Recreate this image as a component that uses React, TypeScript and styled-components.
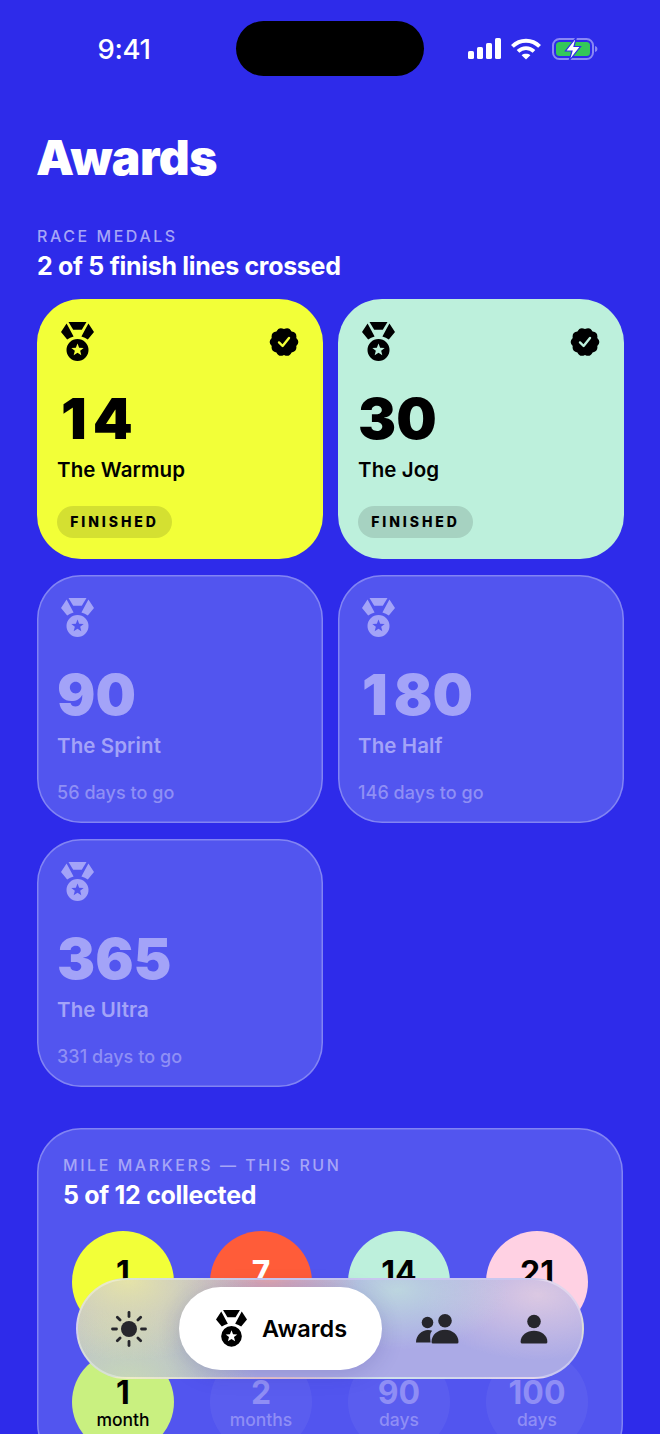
import React from "react";
import styled, { createGlobalStyle } from "styled-components";

const GlobalStyle = createGlobalStyle`
  html, body {
    margin: 0;
    padding: 0;
    background: #2e2bea;
  }
  body {
    font-family: Inter, "Liberation Sans", sans-serif;
    -webkit-font-smoothing: antialiased;
  }
`;

const Screen = styled.div`
  position: relative;
  width: 660px;
  height: 1434px;
  padding-top: 21px;
  box-sizing: border-box;
  overflow: hidden;
  background: #2e2bea;
  color: #ffffff;
`;

const StatusBar = styled.div`
  display: flex;
  align-items: center;
  height: 55px;
`;

const Time = styled.div`
  width: 236px;
  padding-left: 12px;
  box-sizing: border-box;
  text-align: center;
  font-size: 27.5px;
  font-weight: 500;
  letter-spacing: -0.3px;
`;

const Island = styled.div`
  width: 188px;
  height: 55px;
  border-radius: 28px;
  background: #000000;
`;

const StatusIcons = styled.div`
  display: flex;
  align-items: center;
  gap: 10px;
  margin-left: 44px;
`;

const Content = styled.div`
  padding: 0 37px;
`;

const Title = styled.h1`
  margin: 54px 0 0 -1px;
  font-size: 48px;
  line-height: 56px;
  font-weight: 900;
  letter-spacing: -0.5px;
`;

const Eyebrow = styled.div`
  font-size: 16px;
  line-height: 20px;
  font-weight: 500;
  letter-spacing: 2.55px;
  color: #a6a5f7;
`;

const Headline = styled.div`
  font-size: 25px;
  line-height: 32px;
  font-weight: 700;
  letter-spacing: -0.3px;
  margin-top: 4px;
  color: #ffffff;
`;

const MedalSection = styled.section`
  margin-top: 40px;
`;

const MedalGrid = styled.div`
  display: grid;
  grid-template-columns: 286px 286px;
  column-gap: 15px;
  row-gap: 16px;
  margin-top: 17px;
`;

type CardTone = "yellow" | "mint" | "locked";

const cardBackground: Record<CardTone, string> = {
  yellow: "#f2ff38",
  mint: "#bdf0dc",
  locked: "#5255ef",
};

const MedalCard = styled.div<{ $tone: CardTone }>`
  display: flex;
  flex-direction: column;
  box-sizing: border-box;
  height: ${(p) => (p.$tone === "locked" ? "248px" : "260px")};
  padding: 23px 20px ${(p) => (p.$tone === "locked" ? "19px" : "21px")};
  border-radius: 44px;
  background: ${(p) => cardBackground[p.$tone]};
  box-shadow: ${(p) =>
    p.$tone === "locked" ? "inset 0 0 0 1.5px rgba(255,255,255,0.28)" : "none"};
  color: ${(p) => (p.$tone === "locked" ? "#a3a3f8" : "#000000")};
`;

const CardTop = styled.div`
  display: flex;
  align-items: flex-start;
  justify-content: space-between;
  height: 40px;
  padding: 0 4px;
`;

const SealWrap = styled.div`
  margin-top: 5px;
`;

const Distance = styled.div`
  margin-top: 21px;
  font-size: 57px;
  line-height: 72px;
  font-weight: 900;
`;

// the reference numerals have a wider "1" than Inter
const One = styled.span`
  margin: 0 6px 0 4px;
`;

const RaceName = styled.div`
  margin-top: 2px;
  font-size: 20.5px;
  line-height: 26px;
  font-weight: 600;
  letter-spacing: 0.1px;
`;

const FinishedPill = styled.div`
  align-self: flex-start;
  margin-top: auto;
  width: 115px;
  height: 32px;
  border-radius: 16px;
  background: rgba(0, 0, 0, 0.12);
  font-size: 14px;
  line-height: 32px;
  font-weight: 800;
  letter-spacing: 2.9px;
  text-align: center;
  color: #000000;
`;

const DaysLeft = styled.div`
  margin-top: auto;
  font-size: 18px;
  line-height: 22px;
  font-weight: 500;
  letter-spacing: 0.05px;
  color: #8f8ff5;
`;

const MarkersPanel = styled.section`
  margin-top: 41px;
  height: 340px;
  box-sizing: border-box;
  padding: 27px 26px 0;
  border-radius: 44px;
  background: #5255ef;
  box-shadow: inset 0 0 0 1.5px rgba(255, 255, 255, 0.28);
`;

const MarkerGrid = styled.div`
  display: grid;
  grid-template-columns: repeat(4, 102px);
  column-gap: 36px;
  row-gap: 18px;
  margin: 20px 0 0 9px;
`;

type MarkerTone = "yellow" | "orange" | "mint" | "pink" | "lime" | "locked";

const markerBackground: Record<MarkerTone, string> = {
  yellow: "#f2ff38",
  orange: "#ff5c39",
  mint: "#bdf0dc",
  pink: "#ffd1e3",
  lime: "#c9f080",
  locked: "rgba(255,255,255,0.05)",
};

const markerColor: Record<MarkerTone, string> = {
  yellow: "#000000",
  orange: "#ffffff",
  mint: "#000000",
  pink: "#000000",
  lime: "#000000",
  locked: "#8f8ef5",
};

const Marker = styled.div<{ $tone: MarkerTone }>`
  display: flex;
  flex-direction: column;
  align-items: center;
  box-sizing: border-box;
  width: 102px;
  height: 102px;
  padding-top: 25px;
  border-radius: 50%;
  background: ${(p) => markerBackground[p.$tone]};
  color: ${(p) => markerColor[p.$tone]};
`;

const MarkerValue = styled.div`
  font-size: 32px;
  line-height: 34px;
  font-weight: 700;
`;

const MarkerUnit = styled.div`
  font-size: 17.5px;
  line-height: 20px;
  font-weight: 500;
`;

const TabBar = styled.nav`
  position: absolute;
  left: 76px;
  top: 1278px;
  display: flex;
  align-items: center;
  box-sizing: border-box;
  width: 508px;
  height: 101px;
  padding-left: 1px;
  border-radius: 51px;
  border: 2px solid rgba(255, 255, 255, 0.35);
  background:
    radial-gradient(ellipse 130px 80px at 50px 0px, rgba(232, 230, 165, 0.95), transparent),
    radial-gradient(ellipse 130px 70px at 50px 100px, rgba(200, 218, 180, 0.9), transparent),
    radial-gradient(ellipse 150px 80px at 40px 50px, rgba(196, 200, 196, 0.95), transparent),
    radial-gradient(ellipse 90px 40px at 190px 0px, rgba(230, 165, 165, 0.85), transparent),
    radial-gradient(ellipse 110px 60px at 320px 10px, rgba(190, 218, 222, 0.9), transparent),
    radial-gradient(ellipse 120px 65px at 460px 15px, rgba(222, 202, 226, 0.95), transparent),
    #abaae6;
`;

const TabSlot = styled.div<{ $width: number }>`
  display: flex;
  align-items: center;
  justify-content: center;
  width: ${(p) => p.$width}px;
  color: #26262c;
`;

const ActiveTab = styled.div`
  display: flex;
  align-items: center;
  gap: 15px;
  box-sizing: border-box;
  width: 203px;
  height: 83px;
  padding-left: 37px;
  border-radius: 42px;
  background: #ffffff;
  color: #000000;
  font-size: 23.5px;
  font-weight: 600;
  box-shadow: 0 4px 22px rgba(40, 40, 120, 0.18);
`;

const STAR =
  "M16.5 21.5L18.15 25.73L22.68 25.99L19.16 28.87L20.32 33.26L16.5 30.8L12.68 33.26L13.84 28.87L10.32 25.99L14.85 25.73Z";

const Medal = ({ size = 33 }: { size?: number }) => (
  <svg
    width={size}
    height={(size * 39) / 33}
    viewBox="0 0 33 39"
    fill="currentColor"
  >
    <path d="M7.5 0H25.5L20.8 7.8H12.2Z" />
    <path d="M5.6 1.6L0 10L6.2 17.6Q9 15.5 12.6 14.6Z" />
    <path d="M27.4 1.6L33 10L26.8 17.6Q24 15.5 20.4 14.6Z" />
    <path
      fillRule="evenodd"
      d={`M16.5 17a11 11 0 1 0 0 22a11 11 0 1 0 0-22Z ${STAR}`}
    />
  </svg>
);

// scalloped seal, ten lobes round a circle
const sealPath = () => {
  const lobes = 10;
  let d = "";
  for (let i = 0; i < lobes; i++) {
    const a = (i / lobes) * Math.PI * 2 - Math.PI / 2;
    const b = ((i + 0.5) / lobes) * Math.PI * 2 - Math.PI / 2;
    const c = ((i + 1) / lobes) * Math.PI * 2 - Math.PI / 2;
    const x0 = 15 + 12.9 * Math.cos(a);
    const y0 = 15 + 12.9 * Math.sin(a);
    const cx = 15 + 16.4 * Math.cos(b);
    const cy = 15 + 16.4 * Math.sin(b);
    const x1 = 15 + 12.9 * Math.cos(c);
    const y1 = 15 + 12.9 * Math.sin(c);
    if (i === 0) d += `M${x0.toFixed(2)} ${y0.toFixed(2)}`;
    d += `Q${cx.toFixed(2)} ${cy.toFixed(2)} ${x1.toFixed(2)} ${y1.toFixed(2)}`;
  }
  return d + "Z";
};

const Seal = ({ check }: { check: string }) => (
  <svg width="30" height="30" viewBox="0 0 30 30">
    <path d={sealPath()} fill="#000000" />
    <path
      d="M10 15.4L13.6 19L20 11"
      fill="none"
      stroke={check}
      strokeWidth="2.4"
      strokeLinecap="round"
      strokeLinejoin="round"
    />
  </svg>
);

const Signal = () => (
  <svg width="33" height="21" viewBox="0 0 33 21" fill="#ffffff">
    <rect x="0" y="13" width="6" height="8" rx="1.6" />
    <rect x="9" y="9" width="6" height="12" rx="1.6" />
    <rect x="18" y="5" width="6" height="16" rx="1.6" />
    <rect x="27" y="0" width="6" height="21" rx="1.6" />
  </svg>
);

const Wifi = () => (
  <svg width="30" height="22" viewBox="0 0 30 22" fill="none" stroke="#ffffff">
    <path d="M1.4 8.4C9 .8 21 .8 28.6 8.4" strokeWidth="4" />
    <path d="M7 13.4C11.6 9 18.4 9 23 13.4" strokeWidth="3.8" />
    <path d="M15 21.5L10.6 17.2C13 15.4 17 15.4 19.4 17.2Z" fill="#ffffff" stroke="none" />
  </svg>
);

const Battery = () => (
  <svg width="47" height="26" viewBox="-1 0 47 26">
    <rect
      x="1"
      y="3"
      width="40"
      height="20"
      rx="6.5"
      fill="none"
      stroke="#8a88f4"
      strokeWidth="2"
    />
    <rect x="4" y="6" width="34" height="14" rx="3.5" fill="#34c759" />
    <path d="M43 10q2.5 .6 2.5 3t-2.5 3Z" fill="#8a88f4" />
    <path
      d="M24.5 1L13.5 15H20L17 25L28.5 10.5H22Z"
      fill="#ffffff"
      stroke="#2e2bea"
      strokeWidth="1.2"
    />
  </svg>
);

const Sun = () => (
  <svg width="36" height="36" viewBox="0 0 36 36" fill="currentColor">
    <circle cx="18" cy="18" r="8" />
    <g stroke="currentColor" strokeWidth="2.8" strokeLinecap="round">
      <path d="M18 1.5V5.5" />
      <path d="M18 30.5V34.5" />
      <path d="M1.5 18H5.5" />
      <path d="M30.5 18H34.5" />
      <path d="M6.3 6.3L9.1 9.1" />
      <path d="M26.9 26.9L29.7 29.7" />
      <path d="M6.3 29.7L9.1 26.9" />
      <path d="M26.9 9.1L29.7 6.3" />
    </g>
  </svg>
);

const People = () => (
  <svg width="44" height="30" viewBox="0 0 44 30" fill="currentColor">
    <circle cx="12.5" cy="8.5" r="5.8" />
    <path d="M1 28.5C1 21 7 16 13 16C14.6 16 16 16.3 17.2 16.8C14 19.5 15.6 25 15.6 28.5Z" />
    <circle cx="30" cy="6.8" r="6.8" />
    <path d="M16.5 28C16.5 20.5 23 15.8 30 15.8C37 15.8 43.5 20.5 43.5 28Q43.5 29.5 42 29.5H18Q16.5 29.5 16.5 28Z" />
  </svg>
);

const Person = () => (
  <svg width="28" height="30" viewBox="0 0 28 30" fill="currentColor">
    <circle cx="14" cy="7.5" r="6.8" />
    <path d="M.6 28C.6 21.2 7 16.8 14 16.8C21 16.8 27.4 21.2 27.4 28Q27.4 29.6 25.8 29.6H2.2Q.6 29.6 .6 28Z" />
  </svg>
);

const races: {
  distance: string;
  name: string;
  tone: CardTone;
  left?: string;
}[] = [
  { distance: "14", name: "The Warmup", tone: "yellow" },
  { distance: "30", name: "The Jog", tone: "mint" },
  { distance: "90", name: "The Sprint", tone: "locked", left: "56 days to go" },
  { distance: "180", name: "The Half", tone: "locked", left: "146 days to go" },
  { distance: "365", name: "The Ultra", tone: "locked", left: "331 days to go" },
];

const markers: { value: string; unit: string; tone: MarkerTone }[] = [
  { value: "1", unit: "day", tone: "yellow" },
  { value: "7", unit: "days", tone: "orange" },
  { value: "14", unit: "days", tone: "mint" },
  { value: "21", unit: "days", tone: "pink" },
  { value: "1", unit: "month", tone: "lime" },
  { value: "2", unit: "months", tone: "locked" },
  { value: "90", unit: "days", tone: "locked" },
  { value: "100", unit: "days", tone: "locked" },
];

const App = () => {
  return (
    <Screen>
      <GlobalStyle />
      <StatusBar>
        <Time>9:41</Time>
        <Island />
        <StatusIcons>
          <Signal />
          <Wifi />
          <Battery />
        </StatusIcons>
      </StatusBar>
      <Content>
        <Title>Awards</Title>
        <MedalSection>
          <Eyebrow>RACE MEDALS</Eyebrow>
          <Headline>2 of 5 finish lines crossed</Headline>
          <MedalGrid>
            {races.map((race) => (
              <MedalCard key={race.name} $tone={race.tone}>
                <CardTop>
                  <Medal />
                  {race.tone !== "locked" && (
                    <SealWrap>
                      <Seal check={cardBackground[race.tone]} />
                    </SealWrap>
                  )}
                </CardTop>
                <Distance>
                  {race.distance.startsWith("1") ? (
                    <>
                      <One>1</One>
                      {race.distance.slice(1)}
                    </>
                  ) : (
                    race.distance
                  )}
                </Distance>
                <RaceName>{race.name}</RaceName>
                {race.left ? (
                  <DaysLeft>{race.left}</DaysLeft>
                ) : (
                  <FinishedPill>FINISHED</FinishedPill>
                )}
              </MedalCard>
            ))}
          </MedalGrid>
        </MedalSection>
        <MarkersPanel>
          <Eyebrow>MILE MARKERS — THIS RUN</Eyebrow>
          <Headline>5 of 12 collected</Headline>
          <MarkerGrid>
            {markers.map((marker) => (
              <Marker key={marker.value + marker.unit} $tone={marker.tone}>
                <MarkerValue>{marker.value}</MarkerValue>
                <MarkerUnit>{marker.unit}</MarkerUnit>
              </Marker>
            ))}
          </MarkerGrid>
        </MarkersPanel>
      </Content>
      <TabBar>
        <TabSlot $width={100}>
          <Sun />
        </TabSlot>
        <ActiveTab>
          <Medal size={31} />
          Awards
        </ActiveTab>
        <TabSlot $width={110}>
          <People />
        </TabSlot>
        <TabSlot $width={84}>
          <Person />
        </TabSlot>
      </TabBar>
    </Screen>
  );
};

export default App;
